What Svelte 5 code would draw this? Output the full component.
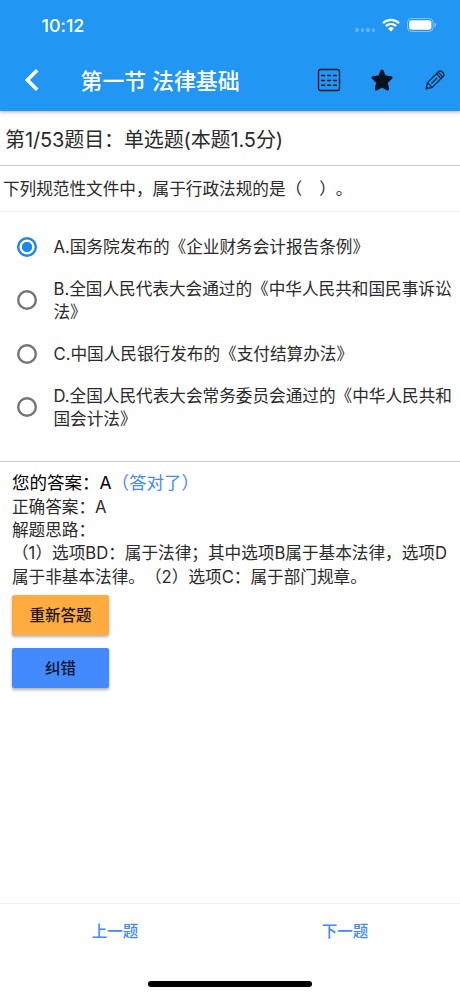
<script>
  const options = [
    { text: ['A.国务院发布的《企业财务会计报告条例》'], checked: true },
    { text: ['B.全国人民代表大会通过的《中华人民共和国民事诉讼', '法》'], checked: false },
    { text: ['C.中国人民银行发布的《支付结算办法》'], checked: false },
    { text: ['D.全国人民代表大会常务委员会通过的《中华人民共和', '国会计法》'], checked: false }
  ];
</script>

<div class="screen">
  <header>
    <div class="status">
      <span class="time">10:12</span>
      <span class="signal"><i></i><i></i><i></i><i></i></span>
      <svg class="wifi" width="18" height="14" viewBox="0 0 18 14">
        <path d="M1 5.1a11.4 11.4 0 0 1 16 0" fill="none" stroke="#fff" stroke-width="2.3" />
        <path d="M3.9 8.1a7.3 7.3 0 0 1 10.2 0" fill="none" stroke="#fff" stroke-width="2.2" />
        <path d="M6.1 10.5a4.2 4.2 0 0 1 5.8 0L9 13.5z" fill="#fff" />
      </svg>
      <svg class="battery" width="30" height="14" viewBox="0 0 30 14">
        <rect x=".5" y=".5" width="25.6" height="13" rx="4" fill="none" stroke="#fff" stroke-opacity=".45" />
        <rect x="2.2" y="2.2" width="22.2" height="9.6" rx="2.5" fill="#fff" />
        <path d="M27.500 4.800c2 .7 2 3.700 0 4.400z" fill="#fff" fill-opacity=".5" />
      </svg>
    </div>
    <div class="bar">
      <svg class="back" width="16" height="24" viewBox="0 0 16 24">
        <path d="M13.200 2.200 3.400 12l9.800 9.800" fill="none" stroke="#fff" stroke-width="3.600" />
      </svg>
      <h1>第一节 法律基础</h1>
      <svg class="sheet" width="24" height="24" viewBox="0 0 24 24" fill="none" stroke="#07192b">
        <rect x="1.500" y="1.500" width="21" height="21" rx="2.200" stroke-width="1.300" />
        <path d="M4.700 7.500h2.800M10.600 7.500h2.800M16.500 7.500h2.800M4.700 12.400h2.800M10.600 12.400h2.800M16.500 12.400h2.800M4.700 17.200h2.800M10.600 17.200h2.800M16.500 17.200h2.800" stroke-width="1.500" stroke-linecap="round" />
      </svg>
      <svg class="star" width="24" height="24" viewBox="0 0 24 24">
        <path d="M12 3.200l2.500 5.600 6.500.9-4.700 4.600 1.300 6.700-5.600-3-5.600 3 1.300-6.700L3 9.700l6.500-.9z" fill="#07131f" stroke="#07131f" stroke-width="3" stroke-linejoin="round" />
      </svg>
      <svg class="pencil" width="22" height="22" viewBox="0 0 22 22" fill="none" stroke="#0a2440" stroke-width="1.250" stroke-linejoin="round" stroke-linecap="round">
        <path d="M2.200 19.800l1.300-6.200L14.600 2.500q1.500-1.300 3 0l1.800 1.800q1.300 1.500 0 3L8.300 18.400zM12.300 4.800l4.800 4.800M14 3.100l4.800 4.800M3.500 13.600l4.800 4.800M2.200 19.800l2.100-.4-1.700-1.700M7.800 14.200l5-5" />
      </svg>
    </div>
  </header>

  <div class="heading">第1/53题目：单选题(本题1.5分)</div>
  <div class="question">下列规范性文件中，属于行政法规的是（<span class="blank"></span>）。</div>

  <div class="options">
    {#each options as option}
      <div class="option">
        <span class="radio" class:checked={option.checked}></span>
        <div class="label">
          {#each option.text as line}
            <div class="line">{line}</div>
          {/each}
        </div>
      </div>
    {/each}
  </div>

  <section class="answer">
    <div class="yours">您的答案：A<span class="right">（答对了）</span></div>
    <div class="line">正确答案：A</div>
    <div class="line">解题思路：</div>
    <div class="line">（1）选项BD：属于法律；其中选项B属于基本法律，选项D</div>
    <div class="line">属于非基本法律。（2）选项C：属于部门规章。</div>
    <button class="retry">重新答题</button>
    <button class="report">纠错</button>
  </section>

  <footer>
    <div class="nav"><span>上一题</span><span>下一题</span></div>
    <div class="home"></div>
  </footer>
</div>

<style>
  :global(body) { background: #fefefe; }
  .screen {
    width: 460px;
    height: 996px;
    overflow: hidden;
    display: flex;
    flex-direction: column;
    background: #fefefe;
    color: #2a2a2a;
    font-family: "Inter", "Noto Sans CJK SC", sans-serif;
    font-size: 16.640px;
    white-space: nowrap;
    font-feature-settings: "calt" 0;
    text-spacing-trim: space-all;
  }
  header {
    flex: none;
    height: 111px;
    background: #2196f3;
    box-shadow: 0 1px 4px rgba(0, 0, 0, .32);
    color: #fff;
  }
  .status {
    height: 50px;
    display: flex;
    align-items: center;
    padding-left: 41.500px;
  }
  .time { width: 313.500px; padding-top: 1px; font-size: 17.900px; font-weight: 500; line-height: 22px; }
  .signal { display: flex; gap: 2px; margin-top: 10px; width: 27px; }
  .signal i { width: 3.600px; height: 3.600px; border-radius: 50%; background: rgba(255, 255, 255, .3); }
  .battery { margin-left: 7px; }
  .bar {
    height: 60px;
    display: flex;
    align-items: center;
    padding-left: 24px;
  }
  h1 {
    margin: 0 0 0 40.500px;
    width: 236.500px;
    font-size: 21.900px;
    font-weight: 500;
    line-height: 32px;
    padding-top: 1px;
  }
  .star { margin-left: 29px; }
  .pencil { margin-left: 30px; }
  .heading {
    flex: none;
    height: 55px;
    box-sizing: border-box;
    padding: 1px 0 0 5px;
    line-height: 56px;
    font-size: 20px;
    letter-spacing: -.12px;
    border-bottom: 1px solid #ccc;
  }
  .question {
    flex: none;
    height: 46px;
    box-sizing: border-box;
    padding: 1px 0 0 3px;
    line-height: 45px;
    border-bottom: 1px solid #f0f0f0;
  }
  .blank { display: inline-block; width: 17px; }
  .options {
    flex: none;
    height: 250px;
    box-sizing: border-box;
    padding-top: 8.500px;
    border-bottom: 1px solid #ccc;
  }
  .option {
    height: 53.300px;
    display: flex;
    align-items: center;
    gap: 16.500px;
    padding-left: 17px;
  }
  .label { padding-top: 2px; }
  .radio {
    width: 20px;
    height: 20px;
    border-radius: 50%;
    box-shadow: inset 0 0 0 2.400px #757575;
  }
  .radio.checked {
    box-shadow: inset 0 0 0 2.400px #1e88e5;
    background: radial-gradient(circle, #1e88e5 4.800px, transparent 5.500px);
  }
  .line { height: 23.400px; line-height: 23.400px; }
  .answer { padding: 9px 12px 0; flex: 1; }
  .yours { height: 24.500px; line-height: 24.500px; font-size: 17.500px; color: #000; }
  .right { color: #4489f8; }
  button {
    display: block;
    width: 97px;
    height: 40px;
    padding: 0;
    border: 0;
    border-radius: 2px;
    font: 500 15.500px/41px "Inter", "Noto Sans CJK SC", sans-serif;
    color: #1b1710;
    box-shadow: 0 2px 3px rgba(0, 0, 0, .3);
  }
  .retry { margin-top: 6px; background: #ffab40; }
  .report { margin-top: 13px; background: #448aff; color: #0a1628; }
  footer {
    flex: none;
    height: 93px;
    box-sizing: border-box;
    border-top: 1px solid #f2f2f2;
  }
  .nav { display: flex; height: 77px; line-height: 56px; font-size: 15.500px; font-weight: 500; color: #4489f8; }
  .nav span { flex: 1; text-align: center; }
  .home { width: 164px; height: 5.500px; margin: 0 auto; border-radius: 3px; background: #000; }
</style>
